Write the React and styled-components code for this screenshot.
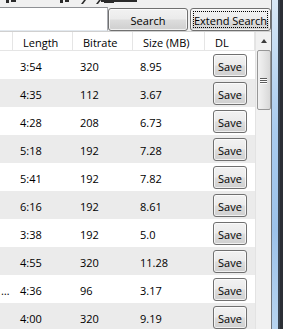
import React from 'react'
import styled, { createGlobalStyle } from 'styled-components'

const GlobalStyle = createGlobalStyle`
    html, body {
        margin: 0;
        padding: 0;
        background: #f0f0f0;
    }
    body {
        font-family: "Open Sans", "Liberation Sans", sans-serif;
        font-size: 11px;
        color: #000;
    }
`

const Shell = styled.div`
    display: flex;
    width: 283px;
    height: 329px;
    overflow: hidden;
    background: #f0f0f0;
`

const Main = styled.div`
    flex: 0 0 271px;
    display: flex;
    flex-direction: column;
    min-width: 0;
`

const Frame = styled.div`
    flex: 1;
    background:
        linear-gradient(to right, #6e737a 0 1px, transparent 1px 7px, #3a4450 7px 9px, #2b2f35 9px),
        linear-gradient(to bottom, #d8e8f7, #a9cbee 40%, #9cc2ea 70%, #b7d4f0);
`

const TopStrip = styled.div`
    height: 7px;
    display: flex;
    align-items: flex-start;
`

const Toolbar = styled.div`
    display: flex;
    align-items: flex-start;
    height: 24px;
`

const SearchField = styled.div`
    flex: 0 0 108px;
    height: 24px;
    box-sizing: border-box;
    background: #fff;
    border: 1px solid #abadb3;
    border-left: none;
    border-top-color: #8e9094;
    border-bottom-color: #e3e9ef;
`

const Button = styled.button`
    flex: 0 0 auto;
    width: ${p => p.$w}px;
    height: 23px;
    margin: 1px 0 0 ${p => p.$gap}px;
    padding: 1px 0 0;
    box-sizing: border-box;
    border: 1px solid #707070;
    border-radius: 3px;
    background: linear-gradient(to bottom, #f2f2f2 0%, #ebebeb 48%, #dddddd 52%, #cfcfcf 100%);
    font-family: "Open Sans", "Liberation Sans", sans-serif;
    font-size: 11px;
    color: #000;
    position: relative;
    box-shadow: inset 0 0 0 1px rgba(255, 255, 255, 0.7);
    &::after {
        content: '';
        display: ${p => (p.$focus ? 'block' : 'none')};
        position: absolute;
        inset: 2px;
        border: 1px dotted #000;
    }
`

const Table = styled.div`
    flex: 1;
    display: flex;
    border-top: 1px solid #d0d0d0;
    min-height: 0;
`

const Grid = styled.div`
    flex: 0 0 255px;
    display: flex;
    flex-direction: column;
    background: #fff;
`

const cols = '13px 60px 60px 72px 50px'

const HeaderRow = styled.div`
    display: grid;
    grid-template-columns: ${cols};
    height: 24px;
    box-sizing: border-box;
    border-bottom: 1px solid #e5e5e5;
    background: #fff;
`

const HeaderCell = styled.div`
    display: flex;
    align-items: center;
    padding: 3px 0 0 10px;
    box-sizing: border-box;
    border-right: 1px solid #e5e5e5;
    white-space: nowrap;
    &:first-child {
        padding-left: 0;
    }
`

const Row = styled.div`
    display: grid;
    grid-template-columns: ${cols};
    height: 28px;
    flex: 0 0 28px;
    background: ${p => (p.$alt ? '#ebebeb' : '#fff')};
`

const Cell = styled.div`
    display: flex;
    align-items: center;
    padding: 2px 0 0 7px;
    white-space: nowrap;
    overflow: hidden;
    &:first-child {
        padding-left: 1px;
    }
`

const SaveCell = styled.div`
    padding: 3px 0 0 8px;
`

const SaveButton = styled(Button)`
    width: 34px;
    margin: 0;
`

const Scrollbar = styled.div`
    flex: 0 0 16px;
    display: flex;
    flex-direction: column;
    align-items: center;
    background: linear-gradient(to right, #e3e3e3 0 1px, #f1f1f1 1px);
`

const ArrowUp = styled.div`
    height: 18px;
    width: 100%;
    display: flex;
    align-items: center;
    justify-content: center;
    padding-left: 1px;
    box-sizing: border-box;
    &::before {
        content: '';
        border-left: 3.5px solid transparent;
        border-right: 3.5px solid transparent;
        border-bottom: 4px solid #3b3b3b;
    }
`

const Thumb = styled.div`
    width: 14px;
    height: 60px;
    margin-left: 1px;
    box-sizing: border-box;
    border: 1px solid #979797;
    border-radius: 2px;
    background: linear-gradient(to right, #f2f2f2, #e6e6e6 50%, #d8d8d8);
    display: flex;
    flex-direction: column;
    align-items: center;
    justify-content: center;
    gap: 1px;
`

const Grip = styled.span`
    width: 7px;
    height: 1px;
    background: #5c5c5c;
    box-shadow: 0 1px 0 #fff;
`

const tracks = [
    ['', '3:54', '320', '8.95'],
    ['', '4:35', '112', '3.67'],
    ['', '4:28', '208', '6.73'],
    ['', '5:18', '192', '7.28'],
    ['', '5:41', '192', '7.82'],
    ['', '6:16', '192', '8.61'],
    ['', '3:38', '192', '5.0'],
    ['', '4:55', '320', '11.28'],
    ['\u2026', '4:36', '96', '3.17'],
    ['', '4:00', '320', '9.19']
]

function Fragments () {
    return (
        <svg width="150" height="5" viewBox="0 0 150 5">
            <g fill="#2a2a2a">
                <rect x="6" y="0" width="3" height="3" />
                <rect x="11" y="0" width="5" height="2" />
                <rect x="60" y="0" width="3" height="3" />
                <rect x="65" y="0" width="4" height="2" />
                <path d="M84 0 L86 0 L83 4 L81 4 Z" />
                <path d="M99 0 L101 0 L98 4 L96 4 Z" />
                <rect x="101" y="0" width="36" height="2" />
                <rect x="104" y="2" width="10" height="1" />
            </g>
        </svg>
    )
}

function App () {
    return (
        <Shell>
            <GlobalStyle />
            <Main>
                <TopStrip>
                    <Fragments />
                </TopStrip>
                <Toolbar>
                    <SearchField />
                    <Button $w={80} $gap={0}>Search</Button>
                    <Button $w={81} $gap={2} $focus>Extend Search</Button>
                </Toolbar>
                <Table>
                    <Grid>
                        <HeaderRow>
                            <HeaderCell />
                            <HeaderCell>Length</HeaderCell>
                            <HeaderCell>Bitrate</HeaderCell>
                            <HeaderCell>Size (MB)</HeaderCell>
                            <HeaderCell>DL</HeaderCell>
                        </HeaderRow>
                        {tracks.map((t, i) => (
                            <Row key={i} $alt={i % 2 === 1}>
                                <Cell>{t[0]}</Cell>
                                <Cell>{t[1]}</Cell>
                                <Cell>{t[2]}</Cell>
                                <Cell>{t[3]}</Cell>
                                <SaveCell>
                                    <SaveButton>Save</SaveButton>
                                </SaveCell>
                            </Row>
                        ))}
                    </Grid>
                    <Scrollbar>
                        <ArrowUp />
                        <Thumb>
                            <Grip />
                            <Grip />
                            <Grip />
                        </Thumb>
                    </Scrollbar>
                </Table>
            </Main>
            <Frame />
        </Shell>
    )
}

export default App
